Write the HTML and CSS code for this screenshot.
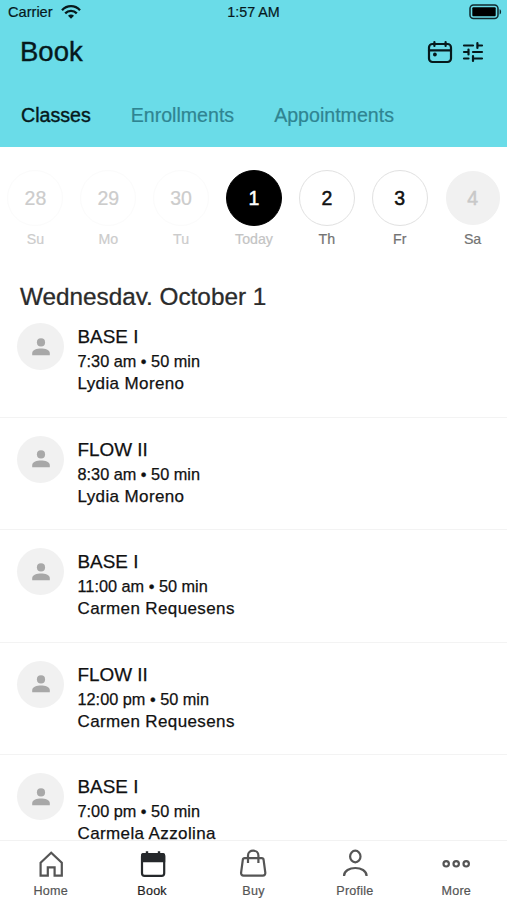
FILE: index.html
```html
<!DOCTYPE html>
<html lang="en">
<head>
<meta charset="utf-8">
<title>Book</title>
<link rel="stylesheet" href="styles.css">
</head>
<body>
<svg class="defs" width="0" height="0" aria-hidden="true">
  <symbol id="person" viewBox="0 0 18 18"><circle cx="9" cy="4.4" r="4.1"/><path d="M.2 17.3v-2.4C.2 11.8 5 10.400 9 10.400s8.800 1.400 8.800 4.500v2.400z"/></symbol>
</svg>
<div class="app">
  <header class="header">
    <div class="status">
      <div class="carrier"><span>Carrier</span>
        <svg width="20" height="14" viewBox="0 0 20 14" fill="none" stroke="#06191c" stroke-width="2.300"><path d="M1 5.200C6-.2 14-.2 19 5.200M4.200 8.400c3.200-3.300 8.400-3.300 11.600 0"/><path d="M10 13.800 7 10.800c1.600-1.600 4.400-1.600 6 0z" fill="#06191c" stroke="none"/></svg>
      </div>
      <span class="clock">1:57 AM</span>
      <svg class="battery" width="33" height="16" viewBox="0 0 33 16"><rect x="1" y="1" width="28" height="13.600" rx="3.500" fill="none" stroke="#10292d" stroke-width="1.500"/><rect x="3.300" y="3.300" width="23.400" height="9" rx="1" fill="#000"/><path d="M30.600 5.200c2 .5 2 4.700 0 5.200z" fill="#10292d"/></svg>
    </div>
    <div class="titlebar">
      <h1>Book</h1>
      <div class="actions">
        <svg width="26" height="24" viewBox="0 0 26 24" fill="none" stroke="#06191c" stroke-width="2.200" stroke-linecap="round"><rect x="2" y="4" width="22" height="18" rx="3.500"/><path d="M2 10.300h22M7.400 2v4M18.600 2v4"/><circle cx="7.900" cy="14.500" r="1.900" fill="#06191c" stroke="none"/></svg>
        <svg width="22" height="22" viewBox="0 0 22 22" fill="none" stroke="#06191c" stroke-width="2.200" stroke-linecap="round"><path d="M2 4.500h9M15.400 4.500H20M15.400 2v5M2 11h4.500M6.500 8.500v5M11 11h9M2 17.500h4.500M11 17.500h9M11 15v5"/></svg>
      </div>
    </div>
    <nav class="tabs"><span class="on">Classes</span><span>Enrollments</span><span>Appointments</span></nav>
  </header>

  <section class="days">
    <div class="day past"><b>28</b><span>Su</span></div>
    <div class="day past"><b>29</b><span>Mo</span></div>
    <div class="day past"><b>30</b><span>Tu</span></div>
    <div class="day today"><b>1</b><span>Today</span></div>
    <div class="day"><b>2</b><span>Th</span></div>
    <div class="day"><b>3</b><span>Fr</span></div>
    <div class="day closed"><b>4</b><span>Sa</span></div>
  </section>

  <h2>Wednesday, October 1</h2>

  <main class="list">
    <article><div class="avatar"><svg><use href="#person"/></svg></div><div class="info"><h3>BASE I</h3><p class="time">7:30 am • 50 min</p><p class="who">Lydia Moreno</p></div></article>
    <article><div class="avatar"><svg><use href="#person"/></svg></div><div class="info"><h3>FLOW II</h3><p class="time">8:30 am • 50 min</p><p class="who">Lydia Moreno</p></div></article>
    <article><div class="avatar"><svg><use href="#person"/></svg></div><div class="info"><h3>BASE I</h3><p class="time">11:00 am • 50 min</p><p class="who">Carmen Requesens</p></div></article>
    <article><div class="avatar"><svg><use href="#person"/></svg></div><div class="info"><h3>FLOW II</h3><p class="time">12:00 pm • 50 min</p><p class="who">Carmen Requesens</p></div></article>
    <article><div class="avatar"><svg><use href="#person"/></svg></div><div class="info"><h3>BASE I</h3><p class="time">7:00 pm • 50 min</p><p class="who">Carmela Azzolina</p></div></article>
  </main>

  <footer class="tabbar">
    <div class="item"><svg viewBox="0 0 30 30"><path d="M4.600 13.800 15.200 3.800l10.600 10v12.800h-7.200v-8.200h-6.800v8.200H4.600z"/></svg><span>Home</span></div>
    <div class="item active"><svg viewBox="0 0 30 30"><rect x="5" y="5" width="22.200" height="21.800" rx="2.600"/><path class="solid" d="M4 13.200V6q0-2 2-2h2.800V2.200h2.400V4h9.600V2.200h2.400V4H26q2.200 0 2.200 2v7.200z"/></svg><span>Book</span></div>
    <div class="item"><svg viewBox="0 0 30 30"><path d="M6.600 9.200h17.200c1.200 0 1.700.6 1.800 1.600l1.700 12.800c.2 1.900-.7 3-2.500 3H5.600c-1.800 0-2.700-1.100-2.500-3l1.700-12.800c.1-1 .6-1.600 1.800-1.600zM10 14V6.500c0-6.400 10.400-6.400 10.400 0V14"/></svg><span>Buy</span></div>
    <div class="item"><svg viewBox="0 0 30 30"><ellipse cx="15.300" cy="7.500" rx="5.200" ry="5.800"/><path d="M4 27C4 16.300 26.600 16.300 26.600 27"/></svg><span>Profile</span></div>
    <div class="item"><svg viewBox="0 0 30 30"><circle cx="5.200" cy="14.800" r="2.700"/><circle cx="15.200" cy="14.800" r="2.700"/><circle cx="25.200" cy="14.800" r="2.700"/></svg><span>More</span></div>
  </footer>
</div>
</body>
</html>
```
FILE: styles.css
```css
* { box-sizing: border-box; }
body { margin: 0; background: #fff; color: #111; font-family: "Liberation Sans", Arial, sans-serif; }
h1, h2, h3, p { margin: 0; font-weight: 400; }
svg { display: block; flex: none; }
.defs { position: absolute; }
.app { height: 900px; display: flex; flex-direction: column; overflow: hidden; }

.header { flex: none; height: 147px; background: #6adce8; color: #06191c; }
.status { height: 24px; padding: 0 5px 0 8px; display: grid; grid-template-columns: 1fr auto 1fr; align-items: center; font-size: 14.600px; -webkit-text-stroke: .2px; }
.carrier { display: flex; align-items: center; gap: 8px; }
.clock { font-size: 14.300px; padding-right: 3px; }
.battery { justify-self: end; }
.titlebar { height: 56px; padding: 0 23px 0 20px; display: flex; align-items: center; justify-content: space-between; }
h1 { font-size: 27.500px; -webkit-text-stroke: .4px; }
.actions { display: flex; align-items: center; gap: 9px; }
.tabs { height: 71px; padding-left: 21px; display: flex; align-items: center; gap: 40px; font-size: 19.600px; color: #2f8491; -webkit-text-stroke: .2px; }
.tabs .on { color: #06191c; -webkit-text-stroke: .4px; }

.days { flex: none; height: 131px; padding-top: 23px; width: 510px; margin-left: -1px; display: grid; grid-template-columns: repeat(7, 1fr); align-content: start; }
.day { display: flex; flex-direction: column; align-items: center; font-size: 14.200px; color: #737373; -webkit-text-stroke: .2px; }
.day b { width: 56px; height: 56px; border: 1px solid #e1e1e1; border-radius: 50%; display: flex; align-items: center; justify-content: center; font-size: 19.500px; font-weight: 400; letter-spacing: 0; color: #111; -webkit-text-stroke: .5px; }
.day span { line-height: 18px; margin-top: 4px; }
.past, .past b { color: #ccc; }
.past b { border-color: #fbfbfb; -webkit-text-stroke: .2px; }
.today { color: #c4c4c4; }
.today b { background: #000; border-color: #000; color: #fff; }
.closed b { width: 54px; height: 54px; margin: 1px; background: #f1f1f1; border-color: #f1f1f1; color: #c8c8c8; }

h2 { flex: none; height: 27px; overflow: hidden; padding-left: 20px; font-size: 24.300px; line-height: 37px; color: #2b2b2b; -webkit-text-stroke: .3px; }

.list { flex: 1; min-height: 0; overflow: hidden; -webkit-text-stroke: .25px; }
article { height: 112.500px; padding: 18px 17px 0; display: flex; gap: 13.500px; border-bottom: 1px solid #f3f3f3; }
.avatar { flex: none; width: 47px; height: 47px; border-radius: 50%; background: #f1f1f1; display: flex; align-items: center; justify-content: center; }
.avatar svg { width: 18px; height: 18px; fill: #a8a8a8; }
.info { padding-top: 2px; }
h3 { font-size: 18.900px; line-height: 24px; }
.time { font-size: 16.300px; line-height: 24px; }
.who { font-size: 17px; line-height: 22px; letter-spacing: .38px; }

.tabbar { flex: none; height: 60px; padding-top: 8px; border-top: 1px solid #f2f2f2; display: grid; grid-template-columns: repeat(5, 1fr); background: #fff; }
.item { display: flex; flex-direction: column; align-items: center; font-size: 12.600px; letter-spacing: .2px; line-height: 16px; color: #555; -webkit-text-stroke: .2px; }
.item svg { width: 30px; height: 30px; margin-bottom: 4px; fill: none; stroke: #555; stroke-width: 2.200; overflow: visible; }
.active { color: #222; }
.active svg { stroke: #25282b; }
.active .solid { fill: #25282b; stroke: none; }
```
